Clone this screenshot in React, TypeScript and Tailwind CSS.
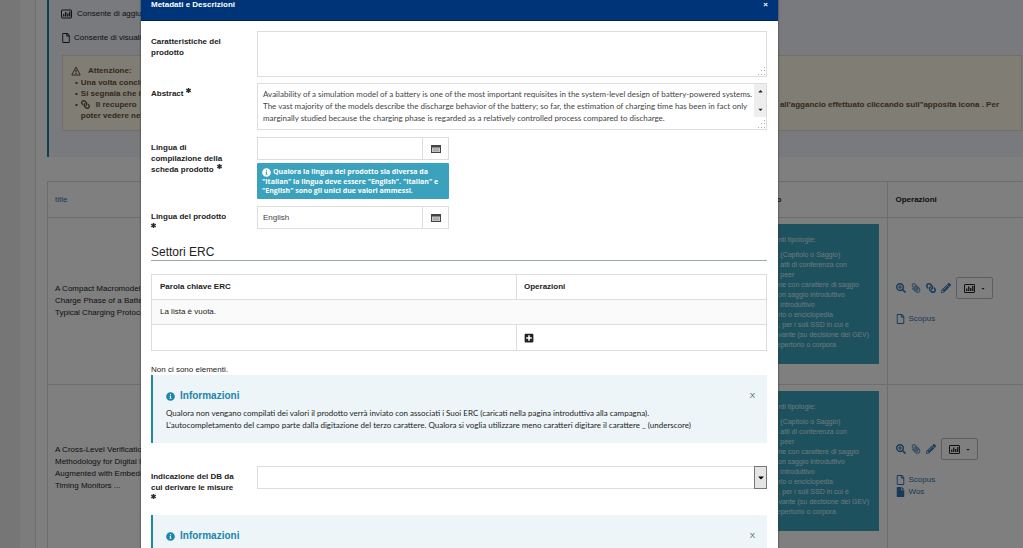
import type { ReactNode } from 'react';
import {
  FaAsterisk,
  FaCaretDown,
  FaFile,
  FaInfoCircle,
  FaLink,
  FaPaperclip,
  FaPencilAlt,
  FaPlusSquare,
  FaRegFile,
  FaSearchPlus,
} from 'react-icons/fa';
import { clsx } from 'clsx';

const abstractText = [
  'Availability of a simulation model of a battery is one of the most important requisites in the system-level design of battery-powered systems.',
  'The vast majority of the models describe the discharge behavior of the battery; so far, the estimation of charging time has been in fact only',
  'marginally studied because the charging phase is regarded as a relatively controlled process compared to discharge.',
].join('\n');

const typologies = [
  'e (Capitolo o Saggio)',
  'n atti di conferenza con',
  'e peer',
  'one con carattere di saggio',
  'con saggio introduttivo',
  'o introduttivo',
  'ario o enciclopedia',
  'e, per i soli SSD in cui è',
  'evante (su decisione del GEV)',
  'repertorio o corpora',
];

type Product = {
  title: string[];
  hasLink: boolean;
  sources: { name: string; filled: boolean }[];
};

const products: Product[] = [
  {
    title: ['A Compact Macromodel for the', 'Charge Phase of a Battery with', 'Typical Charging Protocol'],
    hasLink: true,
    sources: [{ name: 'Scopus', filled: false }],
  },
  {
    title: ['A Cross-Level Verification', 'Methodology for Digital IPs', 'Augmented with Embedded', 'Timing Monitors ...'],
    hasLink: false,
    sources: [
      { name: 'Scopus', filled: false },
      { name: 'Wos', filled: true },
    ],
  },
];

function ChartIcon({ className }: { className?: string }) {
  return (
    <svg viewBox="0 0 22 18" className={className} fill="none" stroke="currentColor" strokeWidth="2" aria-hidden="true">
      <rect x="1" y="1" width="20" height="16" rx="1" />
      <path d="M5.5 14V9M9.5 14V5M13.5 14V8M17.5 14V4" strokeWidth="2.6" />
    </svg>
  );
}

function WarningIcon({ className }: { className?: string }) {
  return (
    <svg viewBox="0 0 20 20" className={className} fill="none" stroke="currentColor" strokeWidth="2" aria-hidden="true">
      <path d="M10 2 18.5 18H1.5Z" strokeLinejoin="round" />
      <path d="M10 7v6M10 14.2v2" strokeWidth="2.4" />
    </svg>
  );
}

function ListIcon() {
  return (
    <svg viewBox="0 0 20 16" className="h-2 w-2.5" fill="none" stroke="#444" aria-hidden="true">
      <rect x="1" y="1" width="18" height="14" fill="#ccc" strokeWidth="2" />
      <path d="M1 3h18" strokeWidth="4" />
      <path d="M4 8h12M4 11.5h12" stroke="#888" strokeWidth="1.5" />
    </svg>
  );
}

function ResizeGrip() {
  return (
    <svg viewBox="0 0 9 9" className="pointer-events-none absolute right-px bottom-px h-[9px] w-[9px]" fill="#aaa" aria-hidden="true">
      <path d="M7 0h1v1H7zM4 3h1v1H4zM7 3h1v1H7zM1 7h1v1H1zM4 7h1v1H4zM7 7h1v1H7z" />
    </svg>
  );
}

function RequiredMark({ className }: { className?: string }) {
  return <FaAsterisk className={clsx('h-[5px] w-[5px]', className)} stroke="currentColor" strokeWidth="60" />;
}

function OperationsCell({ product }: { product: Product }) {
  return (
    <div className="flex flex-col gap-[14px] text-[#2f74b0]">
      <div className="flex items-center gap-[5px]">
        <button type="button" aria-label="Dettaglio"><FaSearchPlus className="h-[10px] w-[10px]" /></button>
        <button type="button" aria-label="Allegati" className="opacity-70"><FaPaperclip className="h-[10px] w-[10px] -scale-x-100" /></button>
        {product.hasLink && (
          <button type="button" aria-label="Aggancio"><FaLink className="h-[10px] w-[10px] -scale-x-100" /></button>
        )}
        <button type="button" aria-label="Modifica"><FaPencilAlt className="h-[10px] w-[10px]" /></button>
        <button type="button" aria-label="Misure" className="flex h-[22px] w-[37px] items-center justify-center gap-[6px] rounded-[2px] border border-[#bbb] text-[#222]">
          <ChartIcon className="h-[9px] w-[11px]" />
          <FaCaretDown className="h-[5px] w-[4px]" />
        </button>
      </div>
      <div>
        {product.sources.map((source) => (
          <a key={source.name} href="#" className="flex items-center gap-[4px] leading-[12px]">
            {source.filled ? <FaFile className="h-[10px] w-[9px]" /> : <FaRegFile className="h-[10px] w-[9px]" />}
            {source.name}
          </a>
        ))}
      </div>
    </div>
  );
}

function ProductsPage() {
  return (
    <div className="flex h-screen overflow-hidden bg-[#ececec]">
      <div className="w-5 shrink-0" />
      <div className="flex flex-1 border-l border-[#f2f2f2] bg-[#f8f8f8] pl-[14px]">
        <div className="flex-1 border-l border-[#dcdcdc] bg-white pl-[11px]">
          <div className="h-[157px] border-l-2 border-[#1b809e] bg-[#f1f5fa] pt-[8px] pl-[12px]">
            <p className="flex items-center gap-[5px]">
              <ChartIcon className="h-[10px] w-[11px]" /> Consente di aggiungere
            </p>
            <p className="mt-[12px] flex items-center gap-[3px]">
              <FaRegFile className="h-[10px] w-[10px]" /> Consente di visualizzare
            </p>
            <div className="mt-[11px] mr-px ml-px h-[76px] border border-[#e8dcc8] bg-[#fffae9] pt-[9px] pl-[8px] font-bold text-[#6b5132]">
              <p className="flex items-center gap-[7px]">
                <WarningIcon className="h-[10px] w-[10px]" /> Attenzione:
              </p>
              <ul className="pl-[4px] leading-[11px]">
                <li className="flex gap-[3px]"><span>•</span>Una volta concluso</li>
                <li className="flex gap-[3px]"><span>•</span>Si segnala che il</li>
                <li className="flex gap-[3px]">
                  <span>•</span>
                  <div className="flex-1">
                    <div className="flex items-center">
                      <FaLink className="mr-[6px] h-[9px] w-[9px] -scale-x-100" />
                      Il recupero
                      <span className="mr-[22px] ml-auto">all&apos;aggancio effettuato cliccando sull&quot;apposita icona . Per</span>
                    </div>
                    poter vedere nella
                  </div>
                </li>
              </ul>
            </div>
          </div>
          <table className="mt-6 w-full table-fixed border-collapse border-t border-l border-[#ddd] text-left">
            <thead>
              <tr className="h-9 border-b border-[#ddd]">
                <th className="w-[140px] pl-[7px] font-normal text-[#2f74b0]">title</th>
                <th className="pr-[105px] text-right">Tipologia prodotto</th>
                <th className="w-[136px] border-l border-[#ddd] pl-[8px]">Operazioni</th>
              </tr>
            </thead>
            <tbody>
              {products.map((product) => (
                <tr key={product.title[0]} className="border-b border-[#ddd]">
                  <td className="pl-[7px] leading-[12px] whitespace-nowrap">
                    {product.title.map((line) => <div key={line}>{line}</div>)}
                  </td>
                  <td className="pt-[6px] pr-[8px] pb-[20px]">
                    <div className="flex h-[140px] justify-end bg-[#3ba2bd] text-[7px] leading-[10px] text-[#dff0f5]">
                      <div className="w-[104px] pt-[11px] whitespace-nowrap">
                        <p className="mb-[5px]">enti tipologie:</p>
                        {typologies.map((typology) => <p key={typology}>{typology}</p>)}
                      </div>
                    </div>
                  </td>
                  <td className="border-l border-[#ddd] pl-[8px]"><OperationsCell product={product} /></td>
                </tr>
              ))}
            </tbody>
          </table>
        </div>
      </div>
    </div>
  );
}

type FieldProps = {
  id: string;
  label: string[];
  required?: boolean;
  className?: string;
  children: ReactNode;
};

function Field({ id, label, required, className, children }: FieldProps) {
  return (
    <div className={clsx('flex', className)}>
      <label htmlFor={id} className="w-[106px] shrink-0 pt-[5px] leading-[11px] font-bold">
        {label.map((line, index) => (
          <span key={line} className="block whitespace-nowrap">
            {line}
            {required && index === label.length - 1 && <RequiredMark className="ml-[3px] inline align-[3px]" />}
          </span>
        ))}
      </label>
      <div className="min-w-0 flex-1">{children}</div>
    </div>
  );
}

function LookupInput({ id, value }: { id: string; value?: string }) {
  return (
    <div className="flex h-[23px] w-[192px] border border-[#ddd]">
      <input id={id} defaultValue={value} className="min-w-0 flex-1 px-[5px] text-[#444] outline-none" />
      <button type="button" aria-label="Apri elenco" className="flex w-[26px] items-center justify-center border-l border-[#ddd]">
        <ListIcon />
      </button>
    </div>
  );
}

function InfoBox({ children }: { children?: ReactNode }) {
  return (
    <section className="h-[68px] border-l-2 border-[#1b8a9a] bg-[#edf5f8] pt-[14px] pr-[12px] pl-[13px]">
      <div className="flex items-center text-[#1b86ab]">
        <FaInfoCircle className="mr-[5px] h-[9px] w-[9px]" />
        <h4 className="text-[10px] leading-[14px] font-bold">Informazioni</h4>
        <button type="button" aria-label="Chiudi" className="ml-auto text-[#555]">X</button>
      </div>
      <div className="mt-[4px] font-[Lato,Arial,sans-serif] leading-[12px]">{children}</div>
    </section>
  );
}

function MetadataDialog() {
  return (
    <div role="dialog" aria-label="Metadati e Descrizioni" className="-mt-[10px] mr-[245px] ml-[141px] flex-1 self-start bg-white pb-10 shadow-[0_0_2px_#333]">
      <header className="flex h-[31px] items-center justify-between border-b border-[#002457] bg-[#003478] pr-[10px] pl-[10px] font-bold text-white">
        <h3>Metadati e Descrizioni</h3>
        <button type="button" aria-label="Chiudi finestra">×</button>
      </header>
      <form className="pt-[10px] pr-[11px] pl-[10px]">
        <Field id="features" label={['Caratteristiche del', 'prodotto']}>
          <div className="relative flex">
            <textarea id="features" className="h-[46px] flex-1 resize-none border border-[#ddd] outline-none" />
            <ResizeGrip />
          </div>
        </Field>
        <Field id="abstract" label={['Abstract']} required className="mt-[6px]">
          <div className="relative flex">
            <textarea
              id="abstract"
              defaultValue={abstractText}
              className="h-[47px] flex-1 resize-none overflow-hidden border border-[#ddd] px-[5px] pt-[4px] font-[Lato,Arial,sans-serif] leading-[12px] whitespace-pre text-[#444] outline-none"
            />
            <div className="absolute top-px right-px flex h-[33px] w-[12px] flex-col items-center justify-between bg-[#eee] py-[4px] text-[#222]">
              <FaCaretDown className="h-[7px] w-[7px] rotate-180" />
              <FaCaretDown className="h-[7px] w-[7px]" />
            </div>
            <ResizeGrip />
          </div>
        </Field>
        <Field id="form-language" label={['Lingua di', 'compilazione della', 'scheda prodotto']} required className="mt-[7px]">
          <LookupInput id="form-language" />
          <p className="mt-[3px] h-[36px] w-[192px] rounded-[1px] bg-[#3ba2bd] px-[5px] pt-[4px] font-['Open_Sans',sans-serif] text-[7px] leading-[9px] font-bold whitespace-nowrap text-white">
            <FaInfoCircle className="mr-[2px] inline h-[9px] w-[9px]" />
            Qualora la lingua del prodotto sia diversa da
            <br />
            &quot;Italian&quot; la lingua deve essere &quot;English&quot;. &quot;Italian&quot; e
            <br />
            &quot;English&quot; sono gli unici due valori ammessi.
          </p>
        </Field>
        <Field id="product-language" label={['Lingua del prodotto']} className="mt-[7px]">
          <LookupInput id="product-language" value="English" />
        </Field>
        <RequiredMark className="-mt-[6px]" />

        <h2 className="mt-[15px] border-b border-[#9aa9ab] pt-px text-[12px] leading-[16px]">Settori ERC</h2>

        <table className="mt-[13px] w-full table-fixed border-collapse border border-[#ddd] text-left">
          <thead>
            <tr className="h-[25px]">
              <th className="w-[365px] border border-[#ddd] pl-[8px]">Parola chiave ERC</th>
              <th className="border border-[#ddd] pl-[7px]">Operazioni</th>
            </tr>
          </thead>
          <tbody>
            <tr className="h-[25px] bg-[#fafafa]">
              <td colSpan={2} className="border border-[#ddd] pl-[8px]">La lista è vuota.</td>
            </tr>
            <tr className="h-[26px]">
              <td className="border border-[#ddd]" />
              <td className="border border-[#ddd] pl-[7px]">
                <button type="button" aria-label="Aggiungi" className="block"><FaPlusSquare className="h-[10px] w-[10px]" /></button>
              </td>
            </tr>
          </tbody>
        </table>

        <p className="mt-[13px] leading-[11px]">Non ci sono elementi.</p>
        <InfoBox>
          <p>Qualora non vengano compilati dei valori il prodotto verrà inviato con associati i Suoi ERC (caricati nella pagina introduttiva alla campagna).</p>
          <p>L&apos;autocompletamento del campo parte dalla digitazione del terzo carattere. Qualora si voglia utilizzare meno caratteri digitare il carattere _ (underscore)</p>
        </InfoBox>

        <Field id="database" label={['Indicazione del DB da', 'cui derivare le misure']} className="mt-[23px]">
          <div className="relative flex">
            <select id="database" className="h-[23px] flex-1 appearance-none border border-[#ddd] bg-white outline-none">
              <option />
            </select>
            <span className="pointer-events-none absolute top-0 right-0 flex h-[23px] w-[13px] items-center justify-center border border-[#777] bg-[#e4e4e4] text-black">
              <FaCaretDown className="h-[9px] w-[8px]" />
            </span>
          </div>
        </Field>
        <RequiredMark className="mt-px mb-[16px]" />
        <InfoBox />
      </form>
    </div>
  );
}

export default function App() {
  return (
    <div className="relative h-screen overflow-hidden font-['Liberation_Sans',Arial,sans-serif] text-[8px] leading-[12px] text-[#222]">
      <ProductsPage />
      <div className="absolute inset-0 flex overflow-hidden bg-black/50">
        <MetadataDialog />
      </div>
    </div>
  );
}
